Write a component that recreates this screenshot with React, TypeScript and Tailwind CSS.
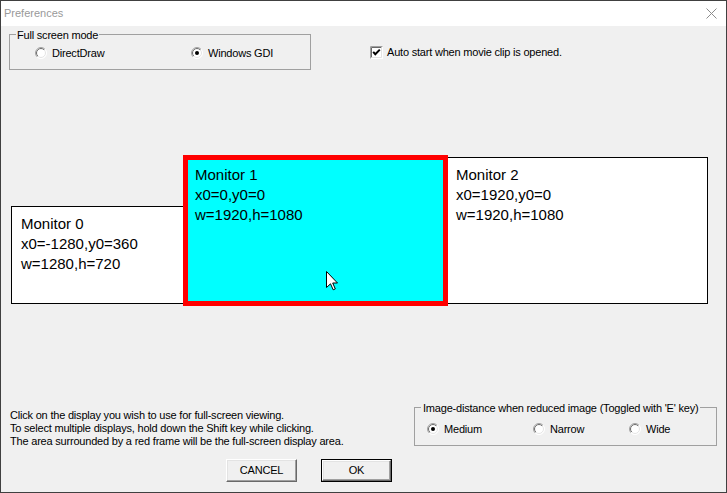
import React from "react";

const Radio = ({ checked }: { checked?: boolean }) => (
  <svg width="12" height="12" viewBox="0 0 12 12" className="shrink-0">
    <defs>
      <linearGradient id="rOuter" x1="0" y1="0" x2="1" y2="1">
        <stop offset="0.5" stopColor="#a0a0a0" />
        <stop offset="0.5" stopColor="#ffffff" />
      </linearGradient>
      <linearGradient id="rInner" x1="0" y1="0" x2="1" y2="1">
        <stop offset="0.5" stopColor="#696969" />
        <stop offset="0.5" stopColor="#e3e3e3" />
      </linearGradient>
    </defs>
    <circle cx="6" cy="6" r="5.5" fill="#fff" stroke="url(#rOuter)" />
    <circle cx="6" cy="6" r="4.5" fill="#fff" stroke="url(#rInner)" />
    {checked && <circle cx="6" cy="6" r="2" fill="#000" />}
  </svg>
);

const RadioItem = ({ label, checked, w }: { label: string; checked?: boolean; w: string }) => (
  <div className={`flex items-center gap-[5px] ${w}`}>
    <Radio checked={checked} />
    <span>{label}</span>
  </div>
);

const Checkbox = () => (
  <svg width="13" height="13" viewBox="0 0 13 13" className="shrink-0">
    <rect x="0" y="0" width="13" height="13" fill="#fff" />
    <path d="M0.5 12.5V0.5H12.5" stroke="#a0a0a0" fill="none" />
    <path d="M1.5 11.5V1.5H11.5" stroke="#696969" fill="none" />
    <path d="M1.5 11.5H11.5V1.5" stroke="#e3e3e3" fill="none" />
    <path d="M3.2 5.8L5.3 8.2L9.8 3.6" stroke="#000" strokeWidth="2" fill="none" />
  </svg>
);

const Button = ({ label, isDefault }: { label: string; isDefault?: boolean }) => (
  <div
    className={`w-[71px] h-[23px] flex ${isDefault ? "border border-black" : ""}`}
  >
    <div className="flex-1 flex items-center justify-center bg-[#f0f0f0] border border-t-white border-l-white border-r-[#696969] border-b-[#696969] shadow-[inset_-1px_-1px_0_#a0a0a0,inset_1px_1px_0_#e3e3e3]">
      {label}
    </div>
  </div>
);

export default function App() {
  return (
    <div className="w-[727px] h-[493px] border border-[#404040] bg-[#f0f0f0] flex flex-col font-['Liberation_Sans',Arial,sans-serif] text-[11px] leading-[13px] tracking-[-0.2px] text-black overflow-hidden">
      {/* Title bar */}
      <div className="h-[25px] bg-white flex items-center justify-between pl-[3px] pr-[9px] shrink-0 tracking-normal">
        <span className="text-[#999999]">Preferences</span>
        <svg width="11" height="11" viewBox="0 0 11 11">
          <path d="M0.5 0.5L10.5 10.5M10.5 0.5L0.5 10.5" stroke="#8c8c8c" strokeWidth="1" />
        </svg>
      </div>

      {/* Top row */}
      <div className="flex items-start h-[44px] shrink-0">
        <div className="relative mt-[8px] ml-[8px] w-[302px] h-[36px] border border-[#a0a0a0] flex items-center pt-[2px] pl-[25px]">
          <span className="absolute left-[6px] -top-[6px] bg-[#f0f0f0] px-[1px]">Full screen mode</span>
          <RadioItem label="DirectDraw" w="w-[156px]" />
          <RadioItem label="Windows GDI" checked w="w-[110px]" />
        </div>
        <div className="ml-[59px] mt-[20px] flex items-center gap-[4px]">
          <Checkbox />
          <span>Auto start when movie clip is opened.</span>
        </div>
      </div>

      {/* Display arrangement canvas */}
      <div className="relative h-[337px] shrink-0 font-['Liberation_Sans',Arial,sans-serif] text-[15px] leading-[20px] tracking-normal">
        <div className="absolute left-[10px] top-[136px] w-[174px] h-[98px] bg-white border border-black pt-[7px] pl-[9px]">
          <div>Monitor 0</div>
          <div>x0=-1280,y0=360</div>
          <div>w=1280,h=720</div>
        </div>
        <div className="absolute left-[446px] top-[87px] w-[261px] h-[147px] bg-white border border-black pt-[7px] pl-[8px]">
          <div>Monitor 2</div>
          <div>x0=1920,y0=0</div>
          <div>w=1920,h=1080</div>
        </div>
        <div className="absolute left-[182px] top-[85px] w-[265px] h-[151px] bg-[#00ffff] border-[5px] border-[#ff0000] pt-[5px] pl-[7px]">
          <div>Monitor 1</div>
          <div>x0=0,y0=0</div>
          <div>w=1920,h=1080</div>
        </div>
        <svg className="absolute left-[325px] top-[201px]" width="13" height="20" viewBox="0 0 13 20">
          <path
            d="M0.5 0.5L0.5 16.5L4.5 12.8L7.2 18.8L9.3 17.9L6.7 12L11.5 12Z"
            fill="#fff"
            stroke="#000"
            strokeWidth="1"
            strokeLinejoin="miter"
          />
        </svg>
      </div>

      {/* Bottom row */}
      <div className="flex items-start h-[41px] shrink-0">
        <div className="pl-[9px] mt-[2px]">
          <div>Click on the display you wish to use for full-screen viewing.</div>
          <div>To select multiple displays, hold down the Shift key while clicking.</div>
          <div>The area surrounded by a red frame will be the full-screen display area.</div>
        </div>
        <div className="relative ml-auto mr-[9px] w-[303px] h-[39px] border border-[#a0a0a0] flex items-center pt-[5px] pl-[12px] shrink-0">
          <span className="absolute left-[6px] -top-[6px] bg-[#f0f0f0] px-[2px] whitespace-nowrap">
            Image-distance when reduced image (Toggled with 'E' key)
          </span>
          <RadioItem label="Medium" checked w="w-[106px]" />
          <RadioItem label="Narrow" w="w-[96px]" />
          <RadioItem label="Wide" w="w-[60px]" />
        </div>
      </div>

      {/* Buttons */}
      <div className="flex mt-[11px] ml-[225px] gap-[24px] shrink-0">
        <Button label="CANCEL" />
        <Button label="OK" isDefault />
      </div>
    </div>
  );
}
